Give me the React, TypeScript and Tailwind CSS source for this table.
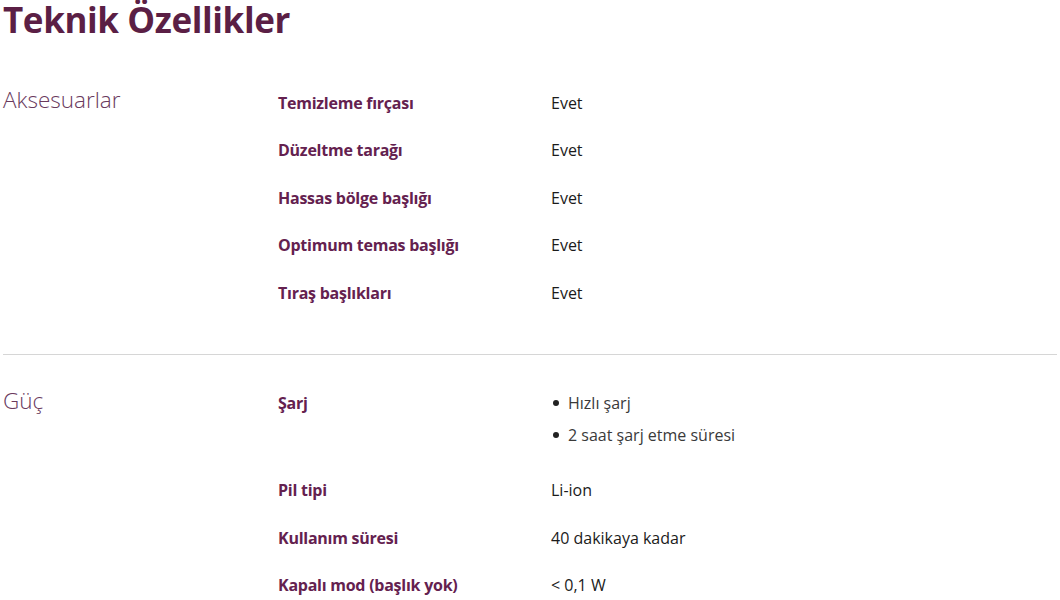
import React from 'react';

type Row = { label: string; value: string | string[] };
type Section = { title: string; rows: Row[] };

const sections: Section[] = [
  {
    title: 'Aksesuarlar',
    rows: [
      { label: 'Temizleme fırçası', value: 'Evet' },
      { label: 'Düzeltme tarağı', value: 'Evet' },
      { label: 'Hassas bölge başlığı', value: 'Evet' },
      { label: 'Optimum temas başlığı', value: 'Evet' },
      { label: 'Tıraş başlıkları', value: 'Evet' },
    ],
  },
  {
    title: 'Güç',
    rows: [
      { label: 'Şarj', value: ['Hızlı şarj', '2 saat şarj etme süresi'] },
      { label: 'Pil tipi', value: 'Li-ion' },
      { label: 'Kullanım süresi', value: '40 dakikaya kadar' },
      { label: 'Kapalı mod (başlık yok)', value: '< 0,1 W' },
    ],
  },
];

const SpecRow: React.FC<{ row: Row }> = ({ row }) => (
  <div className="flex py-[11.75px]">
    <div className="w-[273px] shrink-0 text-[16px] leading-6 font-bold tracking-[-0.25px] text-[#64214f]">{row.label}</div>
    <div className="text-[16px] leading-6 text-[#1b1b1b]">
      {Array.isArray(row.value) ? (
        <ul className="-mt-[4px] mb-[3.5px]">
          {row.value.map((v, i) => (
            <li key={i} className="flex items-center h-[32px] text-[#3a3a3a]">
              <span className="w-[6px] h-[6px] rounded-full bg-[#222] mr-[9px] ml-[2px]"></span>
              {v}
            </li>
          ))}
        </ul>
      ) : (
        row.value
      )}
    </div>
  </div>
);

export default function App() {
  return (
    <div className="w-[1060px] h-[600px] overflow-hidden bg-white px-[3px] font-['Open_Sans',sans-serif]">
      <h1 className="text-[35px] leading-[38px] font-bold text-[#5b1f45] tracking-[-0.4px] pt-[1px]">Teknik Özellikler</h1>

      <div className="mt-[40px]">
        {sections.map((s, idx) => (
          <div key={s.title} className={idx > 0 ? 'border-t border-[#d6d6d6] mt-[37px] pt-[25px]' : ''}>
            <div className="flex">
              <h2 className="w-[275px] shrink-0 text-[22.5px] leading-[36px] font-light text-[#6a3a5d] mt-[3px]">{s.title}</h2>
              <div className="flex-1">
                {s.rows.map((r) => (
                  <SpecRow key={r.label} row={r} />
                ))}
              </div>
            </div>
          </div>
        ))}
      </div>
    </div>
  );
}
